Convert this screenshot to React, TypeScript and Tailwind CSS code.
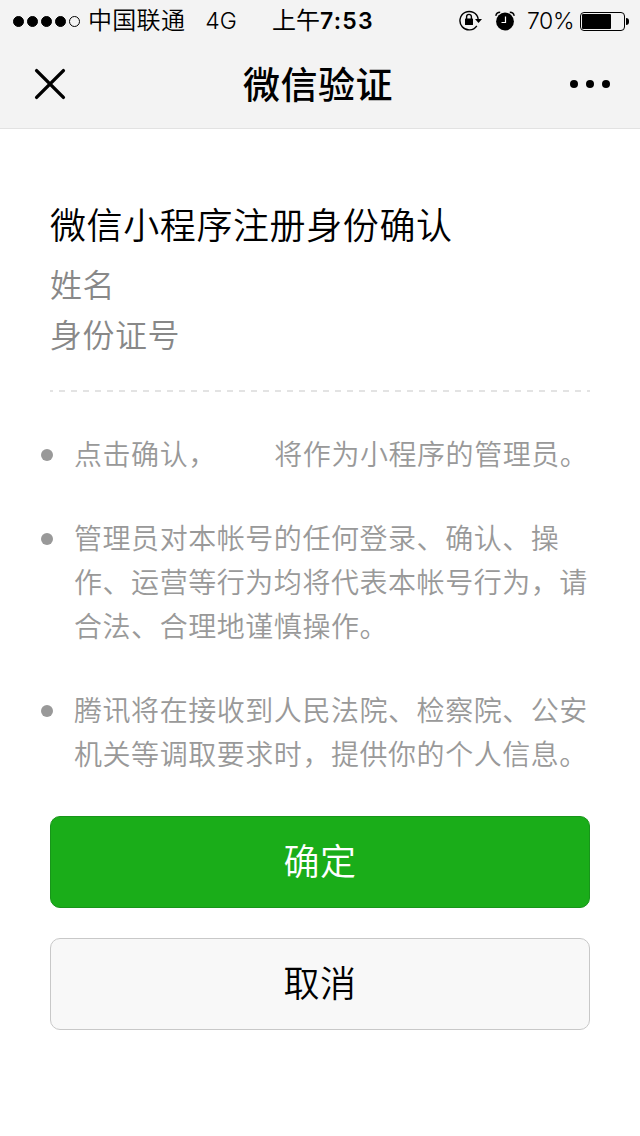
import React from "react";
import clsx from "clsx";

const SIGNAL_DOTS = [true, true, true, true, false];

const NOTICES = [
  ["点击确认，\u3000\u3000\u00a0将作为小程序的管理员。"],
  [
    "管理员对本帐号的任何登录、确认、操",
    "作、运营等行为均将代表本帐号行为，请",
    "合法、合理地谨慎操作。",
  ],
  [
    "腾讯将在接收到人民法院、检察院、公安",
    "机关等调取要求时，提供你的个人信息。",
  ],
];

function RotationLockIcon() {
  return (
    <svg width="24" height="22" viewBox="0 0 24 22" fill="none">
      <path
        d="M17.8 15.8A9.2 9.2 0 1 1 19.2 9"
        stroke="black"
        strokeWidth="1.4"
      />
      <path d="M16 9h7L19.5 13z" fill="black" />
      <rect x="6" y="8.5" width="8" height="6.5" rx="0.6" fill="black" />
      <path
        d="M7.6 9V6.8a2.4 2.4 0 0 1 4.8 0V9"
        stroke="black"
        strokeWidth="1.4"
      />
    </svg>
  );
}

function AlarmIcon() {
  return (
    <svg width="20" height="20" viewBox="0 0 20 20" fill="none">
      <circle cx="10" cy="10.5" r="8.9" fill="black" />
      <path
        d="M0.8 4.8Q1.4 1.2 5.2 1.2M19.2 4.8Q18.6 1.2 14.8 1.2"
        stroke="black"
        strokeWidth="1.4"
      />
      <path d="M10.5 5.5v6H6.5" stroke="white" strokeWidth="1.2" />
    </svg>
  );
}

function StatusBar() {
  return (
    <div className="grid h-10 grid-cols-[259px_1fr_auto] items-center pt-px pr-[11px] pl-[13px] text-[24px] leading-10 font-[350]">
      <div className="flex items-center">
        <div className="flex gap-[3px]">
          {SIGNAL_DOTS.map((filled, i) => (
            <span
              key={i}
              className={clsx(
                "size-[11px] rounded-full border border-black",
                filled && "bg-black",
              )}
            />
          ))}
        </div>
        <span className="ml-2 tracking-[0.3px]">中国联通</span>
        <span className="ml-5 text-[23px]">4G</span>
      </div>
      <span>
        <span className="font-normal">上午</span>
        <span className="text-[23px] font-semibold tracking-[1.2px]">7:53</span>
      </span>
      <div className="flex items-center">
        <RotationLockIcon />
        <span className="ml-3">
          <AlarmIcon />
        </span>
        <span className="ml-3 w-[47px] text-[23px] tracking-[-0.4px]">70%</span>
        <span className="ml-1.5 flex h-[19px] w-[45px] rounded-[4px] border border-black p-px">
          <span className="w-[29px] rounded-[1px] bg-black" />
        </span>
        <span className="ml-px h-[7px] w-[3px] rounded-r-full bg-black" />
      </div>
    </div>
  );
}

function NavBar() {
  return (
    <div className="flex h-[88px] items-center justify-between pr-[30px] pl-[34px]">
      <button type="button" aria-label="关闭">
        <svg width="32" height="32" viewBox="0 0 32 32">
          <path
            d="M2.6 2.6 29.4 29.4M29.4 2.6 2.6 29.4"
            stroke="black"
            strokeWidth="3.4"
            strokeLinecap="round"
          />
        </svg>
      </button>
      <h1 className="pt-1 text-[37px] font-medium tracking-[0.5px]">
        微信验证
      </h1>
      <button type="button" aria-label="更多" className="flex gap-2">
        <span className="size-2 rounded-full bg-black" />
        <span className="size-2 rounded-full bg-black" />
        <span className="size-2 rounded-full bg-black" />
      </button>
    </div>
  );
}

export default function App() {
  return (
    <div className="h-[1136px] w-[640px] overflow-hidden bg-white font-['Inter','Noto_Sans_CJK_SC',sans-serif] text-black">
      <header className="h-[129px] border-b border-[#e2e2e2] bg-[#f3f3f3]">
        <StatusBar />
        <NavBar />
      </header>
      <main className="px-[50px] pt-[70px] font-[350]">
        <h2 className="text-[36px] leading-[54px] tracking-[0.6px]">
          微信小程序注册身份确认
        </h2>
        <div className="mt-2 text-[32px] leading-[50px] tracking-[0.5px] text-[#888]">
          <p>姓名</p>
          <p>身份证号</p>
        </div>
        <div className="mt-[29px] h-0.5 bg-[linear-gradient(90deg,#e3e3e3_50%,transparent_50%)] bg-size-[12px_2px] bg-position-[-3px_0]" />
        <ul className="-mb-px -ml-[9px] pt-[41px] text-[28px] leading-[44px] tracking-[0.55px] text-[#999] [word-spacing:6px]">
          {NOTICES.map((lines, i) => (
            <li key={i} className="mb-10 flex whitespace-nowrap">
              <span className="mt-4 mr-[21px] size-3 shrink-0 rounded-full bg-[#999]" />
              <div>
                {lines.map((line) => (
                  <p key={line}>{line}</p>
                ))}
              </div>
            </li>
          ))}
        </ul>
        <div className="flex flex-col gap-[30px] text-[36px] tracking-[0.4px]">
          <button
            type="button"
            className="h-[92px] rounded-[10px] border border-[#18951a] bg-[#1aad19] text-white"
          >
            确定
          </button>
          <button
            type="button"
            className="h-[92px] rounded-[10px] border border-[#c8c8c8] bg-[#f8f8f8]"
          >
            取消
          </button>
        </div>
      </main>
    </div>
  );
}
